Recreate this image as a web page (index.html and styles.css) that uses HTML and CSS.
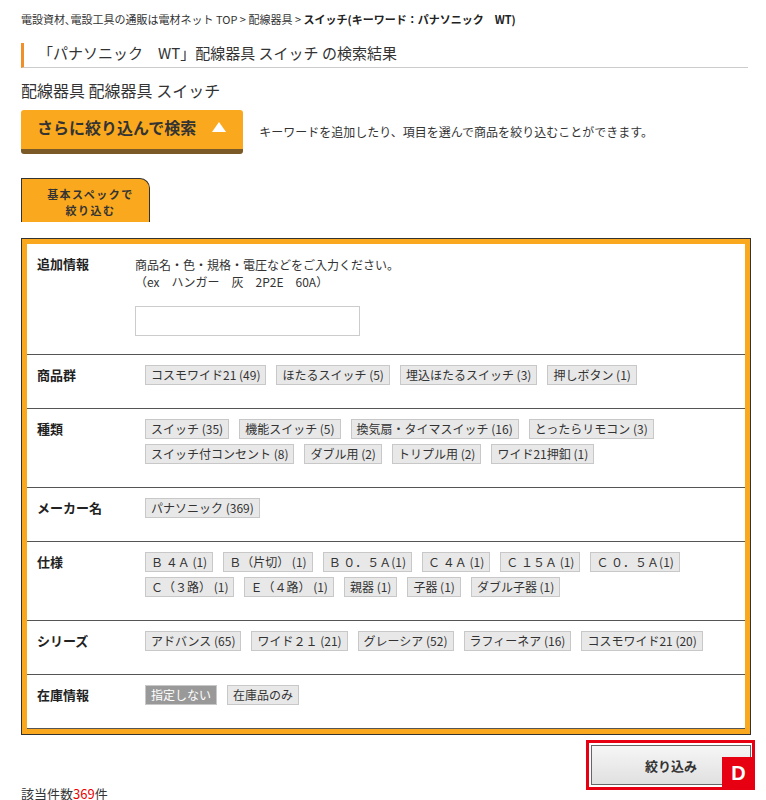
FILE: index.html
```html
<!DOCTYPE html>
<html lang="ja">

<head>
    <meta charset="UTF-8">
    <meta name="viewport" content="width=device-width, initial-scale=1.0">
    <title>スイッチ(キーワード：パナソニック　WT) | 電材ネット</title>
    <link rel="stylesheet" href="styles.css">
</head>

<body>
    <div class="page">
        <p class="breadcrumb">
            <a href="#">電設資材､電設工具の通販は電材ネット TOP</a> &gt;
            <a href="#">配線器具</a> &gt;
            <strong>スイッチ(キーワード：パナソニック　WT)</strong>
        </p>

        <h1 class="result-title">「パナソニック　WT」配線器具 スイッチ の検索結果</h1>

        <h2 class="category">配線器具 配線器具 スイッチ</h2>

        <div class="refine-bar">
            <button class="refine-btn" type="button">
                さらに絞り込んで検索
                <svg class="refine-arrow" width="14" height="10" viewBox="0 0 14 10">
                    <polygon points="7,0 14,10 0,10" fill="#fff" />
                </svg>
            </button>
            <p class="refine-note">キーワードを追加したり、項目を選んで商品を絞り込むことができます。</p>
        </div>

        <div class="tab">基本スペックで<br>絞り込む</div>

        <div class="spec-box">
            <div class="spec-inner">
                <div class="spec-row">
                    <div class="spec-label">追加情報</div>
                    <div class="spec-body">
                        <p class="spec-hint">商品名・色・規格・電圧などをご入力ください。<br>（ex　ハンガー　灰　2P2E　60A）</p>
                        <input class="spec-input" type="text">
                    </div>
                </div>

                <div class="spec-row">
                    <div class="spec-label">商品群</div>
                    <div class="spec-body chips">
                        <a class="chip" href="#">コスモワイド21 (49)</a>
                        <a class="chip" href="#">ほたるスイッチ (5)</a>
                        <a class="chip" href="#">埋込ほたるスイッチ (3)</a>
                        <a class="chip" href="#">押しボタン (1)</a>
                    </div>
                </div>

                <div class="spec-row">
                    <div class="spec-label">種類</div>
                    <div class="spec-body chips">
                        <a class="chip" href="#">スイッチ (35)</a>
                        <a class="chip" href="#">機能スイッチ (5)</a>
                        <a class="chip" href="#">換気扇・タイマスイッチ (16)</a>
                        <a class="chip" href="#">とったらリモコン (3)</a>
                        <a class="chip" href="#">スイッチ付コンセント (8)</a>
                        <a class="chip" href="#">ダブル用 (2)</a>
                        <a class="chip" href="#">トリプル用 (2)</a>
                        <a class="chip" href="#">ワイド21押釦 (1)</a>
                    </div>
                </div>

                <div class="spec-row">
                    <div class="spec-label">メーカー名</div>
                    <div class="spec-body chips">
                        <a class="chip" href="#">パナソニック (369)</a>
                    </div>
                </div>

                <div class="spec-row">
                    <div class="spec-label">仕様</div>
                    <div class="spec-body chips">
                        <a class="chip" href="#">Ｂ ４Ａ (1)</a>
                        <a class="chip" href="#">Ｂ（片切） (1)</a>
                        <a class="chip" href="#">Ｂ ０．５Ａ(1)</a>
                        <a class="chip" href="#">Ｃ ４Ａ (1)</a>
                        <a class="chip" href="#">Ｃ １５Ａ (1)</a>
                        <a class="chip" href="#">Ｃ ０．５Ａ(1)</a>
                        <a class="chip" href="#">Ｃ（３路） (1)</a>
                        <a class="chip" href="#">Ｅ（４路） (1)</a>
                        <a class="chip" href="#">親器 (1)</a>
                        <a class="chip" href="#">子器 (1)</a>
                        <a class="chip" href="#">ダブル子器 (1)</a>
                    </div>
                </div>

                <div class="spec-row">
                    <div class="spec-label">シリーズ</div>
                    <div class="spec-body chips">
                        <a class="chip" href="#">アドバンス (65)</a>
                        <a class="chip" href="#">ワイド２１ (21)</a>
                        <a class="chip" href="#">グレーシア (52)</a>
                        <a class="chip" href="#">ラフィーネア (16)</a>
                        <a class="chip" href="#">コスモワイド21 (20)</a>
                    </div>
                </div>

                <div class="spec-row">
                    <div class="spec-label">在庫情報</div>
                    <div class="spec-body chips">
                        <a class="chip active" href="#">指定しない</a>
                        <a class="chip" href="#">在庫品のみ</a>
                    </div>
                </div>
            </div>
        </div>

        <div class="submit-row">
            <div class="submit-wrap">
                <button class="submit-btn" type="button">絞り込み</button>
                <span class="marker-frame"></span>
                <span class="marker-badge">D</span>
            </div>
        </div>

        <p class="count">該当件数<span class="count-num">369</span>件</p>
    </div>
</body>

</html>
```

FILE: styles.css
```css
body {
    margin: 0;
    padding: 0;
    background: #fff;
    color: #333;
    font-family: "Noto Sans CJK JP", "Noto Sans", sans-serif;
}

.page {
    width: 730px;
    margin-left: 21px;
}

p {
    margin: 0;
}

a {
    color: inherit;
    text-decoration: none;
}

.breadcrumb {
    margin-top: 12px;
    font-size: 11px;
    line-height: 14px;
    color: #333;
}

.breadcrumb strong {
    color: #222;
}

.result-title {
    margin: 17px 3px 0 0;
    padding: 0 0 4px 14px;
    border-left: 3px solid #f0902a;
    border-bottom: 1px solid #ccc;
    font-size: 15px;
    font-weight: normal;
    line-height: 20px;
    color: #333;
}

.category {
    margin: 11px 0 0;
    font-size: 16px;
    font-weight: normal;
    line-height: 22px;
    color: #333;
}

.refine-bar {
    display: flex;
    align-items: center;
    margin-top: 9px;
}

.refine-btn {
    display: flex;
    align-items: center;
    gap: 16px;
    height: 44px;
    padding: 0 17px 5px 16px;
    border: none;
    border-bottom: 5px solid #7b5a28;
    border-radius: 3px;
    background: #faa91e;
    color: #333;
    font-family: inherit;
    font-size: 16px;
    font-weight: bold;
    cursor: pointer;
}

.refine-note {
    margin-left: 16px;
    font-size: 12px;
    line-height: 18px;
    color: #333;
}

.tab {
    width: 129px;
    height: 44px;
    margin-top: 24px;
    padding: 7px 0 0 10px;
    box-sizing: border-box;
    border: 1px solid #333;
    border-bottom: none;
    border-top-right-radius: 10px;
    background: #faa91e;
    text-align: center;
    font-size: 11px;
    font-weight: bold;
    line-height: 16px;
    letter-spacing: 1.5px;
    color: #333;
}

.spec-box {
    margin-top: 16px;
    padding: 5px;
    border: 1px solid #333;
    background: #faa91e;
}

.spec-inner {
    background: #fff;
}

.spec-row {
    display: flex;
    padding: 10px 0 18px 10px;
    border-bottom: 1px solid #555;
}

.spec-label {
    width: 98px;
    flex-shrink: 0;
    font-size: 13px;
    font-weight: bold;
    line-height: 20px;
    color: #222;
}

.spec-body {
    flex: 1;
}

.spec-hint {
    margin-top: 2px;
    font-size: 12px;
    line-height: 17px;
    color: #333;
}

.spec-input {
    display: block;
    width: 225px;
    height: 30px;
    margin-top: 16px;
    box-sizing: border-box;
    border: 1px solid #ccc;
    outline: none;
}

.chips {
    display: flex;
    flex-wrap: wrap;
    padding-right: 10px;
}

.chip {
    display: block;
    margin: 0 0 5px 10px;
    padding: 0 5px;
    border: 1px solid #c8c8c8;
    background: #e8e8e8;
    font-size: 12px;
    line-height: 18px;
    color: #333;
    white-space: nowrap;
}

.chip.active {
    background: #999;
    color: #fff;
}

.submit-row {
    display: flex;
    justify-content: flex-end;
    margin-top: 10px;
}

.submit-wrap {
    position: relative;
}

.submit-btn {
    display: block;
    width: 160px;
    height: 40px;
    border: 1px solid #666;
    background: linear-gradient(#f6f6f6, #e0e0e0);
    font-family: inherit;
    font-size: 13px;
    font-weight: bold;
    color: #333;
    cursor: pointer;
}

/* annotation frame drawn over the button */
.marker-frame {
    position: absolute;
    top: -5px;
    left: -5px;
    right: -4px;
    bottom: -5px;
    border: 3px solid #e60012;
}

.marker-badge {
    position: absolute;
    right: -4px;
    bottom: -5px;
    width: 33px;
    height: 33px;
    background: #e60012;
    color: #fff;
    font-family: "Liberation Sans", sans-serif;
    font-size: 20px;
    font-weight: bold;
    line-height: 33px;
    text-align: center;
}

.count {
    margin-top: 0;
    font-size: 13px;
    line-height: 18px;
    color: #333;
}

.count-num {
    color: #e00;
}
```
